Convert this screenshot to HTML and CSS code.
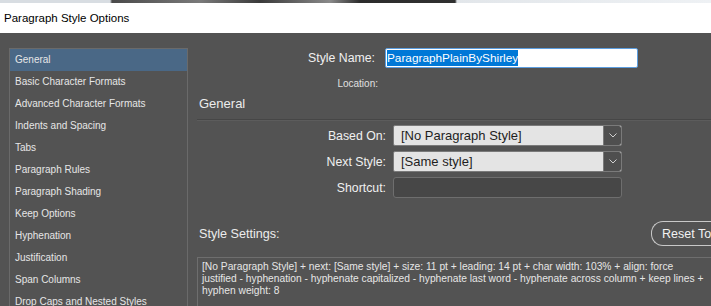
FILE: index.html
```html
<!DOCTYPE html>
<html lang="en">

<head>
    <meta charset="UTF-8">
    <meta name="viewport" content="width=device-width, initial-scale=1.0">
    <title>Paragraph Style Options</title>
    <link rel="stylesheet" href="styles.css">
</head>

<body>

    <div class="strip"></div>
    <div class="titlebar">Paragraph Style Options</div>

    <div class="main">
        <ul class="sidebar">
            <li class="active">General</li>
            <li>Basic Character Formats</li>
            <li>Advanced Character Formats</li>
            <li>Indents and Spacing</li>
            <li>Tabs</li>
            <li>Paragraph Rules</li>
            <li>Paragraph Shading</li>
            <li>Keep Options</li>
            <li>Hyphenation</li>
            <li>Justification</li>
            <li>Span Columns</li>
            <li>Drop Caps and Nested Styles</li>
        </ul>

        <div class="content">
            <div class="name-row">
                <label>Style Name:</label>
                <div class="name-input"><span class="selected">ParagraphPlainByShirley</span></div>
            </div>
            <div class="location">Location:</div>

            <h2 class="section">General</h2>

            <div class="form">
                <label>Based On:</label>
                <div class="select">
                    <span class="value">[No Paragraph Style]</span>
                    <span class="arrow"><svg width="8" height="5" viewBox="0 0 8 5"><polyline points="0.5,0.5 4,4 7.5,0.5" fill="none" stroke="#d0d0d0" stroke-width="1"/></svg></span>
                </div>

                <label>Next Style:</label>
                <div class="select">
                    <span class="value">[Same style]</span>
                    <span class="arrow"><svg width="8" height="5" viewBox="0 0 8 5"><polyline points="0.5,0.5 4,4 7.5,0.5" fill="none" stroke="#d0d0d0" stroke-width="1"/></svg></span>
                </div>

                <label>Shortcut:</label>
                <div class="text-field"></div>
            </div>

            <div class="settings-head">
                <span>Style Settings:</span>
                <button class="reset">Reset To</button>
            </div>

            <div class="settings">
                [No Paragraph Style] + next: [Same style] + size: 11 pt + leading: 14 pt + char width: 103% + align: force<br>
                justified - hyphenation - hyphenate capitalized - hyphenate last word - hyphenate across column + keep lines +<br>
                hyphen weight: 8
            </div>
        </div>
    </div>

</body>

</html>
```

FILE: styles.css
```css
html,
body {
    margin: 0;
    width: 711px;
    height: 306px;
    overflow: hidden;
}

body {
    background: #535353;
    font-family: 'Liberation Sans', Arial, sans-serif;
    color: #ececec;
}

.strip {
    height: 3px;
    background: linear-gradient(to right, #d8dde2 0, #d8dde2 110px, #4a4a4a 112px, #7a7a7a 200px, #3a3a3a 260px, #8a8a8a 330px, #2c2c2c 360px, #303030 455px, #e2e6ea 457px, #eef1f4 100%);
}

.titlebar {
    height: 30px;
    line-height: 30px;
    background: #fff;
    color: #000;
    font-size: 11.5px;
    padding-left: 4px;
}

.main {
    display: flex;
    align-items: flex-start;
}

.sidebar {
    list-style: none;
    margin: 15px 0 0 9px;
    padding: 0;
    width: 177px;
    border: 1px solid #6a6a6a;
    border-bottom: none;
    flex: none;
    height: 300px;
}

.sidebar li {
    height: 22px;
    line-height: 22px;
    padding-left: 5px;
    font-size: 10px;
    color: #e6e6e6;
    white-space: nowrap;
}

.sidebar li.active {
    background: #4a6886;
}

.content {
    flex: none;
    width: 514px;
    margin-left: 9px;
    padding-top: 15px;
}

.name-row {
    display: grid;
    grid-template-columns: 178px 253px;
    column-gap: 10px;
    align-items: center;
}

.name-row label,
.form label {
    text-align: right;
    font-size: 12.3px;
    color: #f0f0f0;
}

.name-input {
    height: 18px;
    background: #fff;
    border: 1px solid #5c9ee0;
    border-radius: 2px;
    display: flex;
    align-items: center;
    padding-left: 1px;
}

.selected {
    background: #0078d7;
    color: #fff;
    font-size: 11.8px;
    line-height: 16px;
}

.location {
    width: 181px;
    text-align: right;
    font-size: 10px;
    line-height: 12px;
    margin-top: 10px;
    color: #e0e0e0;
}

.section {
    margin: 6px 0 0;
    padding: 0 0 7px 2px;
    font-size: 13px;
    font-weight: normal;
    line-height: 16px;
    border-bottom: 1px solid #464646;
    box-shadow: 0 1px 0 #5c5c5c;
}

.form {
    display: grid;
    grid-template-columns: 189px 229px;
    grid-auto-rows: 21px;
    column-gap: 7px;
    row-gap: 5px;
    align-items: center;
    margin-top: 5px;
}

.select {
    height: 21px;
    box-sizing: border-box;
    display: flex;
    background: #e4e4e4;
    border: 1px solid #7a7a7a;
    border-radius: 2px;
}

.select .value {
    flex: 1;
    padding-left: 7px;
    font-size: 13px;
    line-height: 19px;
    color: #1e1e1e;
}

.select .arrow {
    width: 17px;
    background: #4f4f4f;
    border-left: 1px solid #7a7a7a;
    border-radius: 0 2px 2px 0;
    display: flex;
    align-items: center;
    justify-content: center;
}

.text-field {
    height: 21px;
    box-sizing: border-box;
    background: #474747;
    border: 1px solid #6e6e6e;
    border-radius: 3px;
}

.settings-head {
    display: flex;
    align-items: center;
    justify-content: space-between;
    margin-top: 23px;
    padding-left: 2px;
    font-size: 12.6px;
}

.reset {
    width: 60px;
    height: 25px;
    flex: none;
    background: #535353;
    color: #f2f2f2;
    border: 1px solid #c8c8c8;
    border-right: none;
    border-radius: 12px 0 0 12px;
    font-family: inherit;
    font-size: 12.5px;
    text-align: left;
    padding: 0 0 0 10px;
    white-space: nowrap;
}

.settings {
    margin-top: 11px;
    border-top: 1px solid #6e6e6e;
    border-left: 1px solid #6e6e6e;
    padding: 3px 4px 4px;
    font-size: 10.25px;
    line-height: 12px;
    color: #e6e6e6;
    white-space: nowrap;
    height: 60px;
}
```
